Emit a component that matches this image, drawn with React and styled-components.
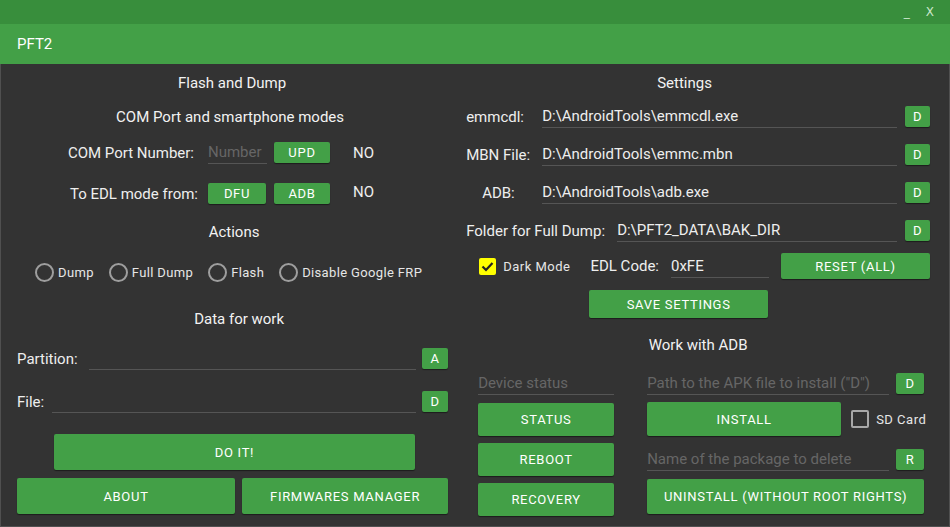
import React from "react";
import styled, { createGlobalStyle } from "styled-components";

const GlobalStyle = createGlobalStyle`
  body {
    margin: 0;
    background: #333333;
    font-family: Roboto, "Noto Sans", sans-serif;
    color: #eeeeee;
  }
`;

const Window = styled.div`
  width: 950px;
  height: 527px;
  display: flex;
  flex-direction: column;
  overflow: hidden;
`;

const TitleBar = styled.div`
  height: 24px;
  background: #388e3c;
  display: flex;
  justify-content: flex-end;
  align-items: center;
  padding-right: 16px;
  gap: 16px;
  color: #c8e6c9;
  font-size: 12px;
  font-family: "DejaVu Sans", sans-serif;
`;

const Header = styled.div`
  height: 40px;
  background: #43a047;
  display: flex;
  align-items: center;
  padding-left: 17px;
  font-size: 15px;
  color: #ffffff;
`;

const Body = styled.div`
  flex: 1;
  display: flex;
  background: #333333;
  border: 1px solid #505050;
  border-top: none;
`;

const LeftCol = styled.div`
  width: 459px;
  display: flex;
  flex-direction: column;
  padding-top: 9px;
`;

const RightCol = styled.div`
  flex: 1;
  display: flex;
  flex-direction: column;
  padding: 9px 19px 0 7px;
`;

const Title = styled.div`
  line-height: 20px;
  font-size: 15px;
  color: #f2f2f2;
  text-align: center;
  margin-top: ${(p) => p.$mt || 0}px;
  padding-left: ${(p) => p.$shift || 0}px;
  padding-right: ${(p) => p.$rshift || 0}px;
`;

const Button = styled.button`
  background: #43a047;
  border: none;
  border-radius: 2px;
  box-shadow: 0 1px 1px rgba(0, 0, 0, 0.45);
  color: #ffffff;
  font-family: Roboto, sans-serif;
  font-weight: 400;
  font-size: 13px;
  letter-spacing: 0.7px;
  text-transform: uppercase;
  padding: 0;
  width: ${(p) => (p.$w ? `${p.$w}px` : "auto")};
  height: ${(p) => p.$h || 21}px;
  flex: ${(p) => (p.$grow ? 1 : "none")};
  cursor: pointer;
`;

const Field = styled.div`
  height: 23px;
  box-sizing: border-box;
  border-bottom: 1px solid #555555;
  line-height: 22px;
  font-size: 15px;
  color: ${(p) => (p.$placeholder ? "#666666" : "#eeeeee")};
  width: ${(p) => (p.$w ? `${p.$w}px` : "auto")};
  flex: ${(p) => (p.$w ? "none" : 1)};
  margin-left: ${(p) => p.$ml || 0}px;
  white-space: nowrap;
  overflow: hidden;
`;

const Label = styled.span`
  font-size: 15px;
  line-height: 20px;
  color: #eeeeee;
  white-space: nowrap;
  width: ${(p) => (p.$w ? `${p.$w}px` : "auto")};
  padding-left: ${(p) => p.$pl || 0}px;
  margin-left: ${(p) => p.$ml || 0}px;
  box-sizing: border-box;
  flex: none;
`;

/* ---------- left column ---------- */

const ModeRow = styled.div`
  display: grid;
  grid-template-columns: 199px 58px 56px auto;
  column-gap: 8px;
  align-items: center;
  margin-top: ${(p) => p.$mt}px;
  height: 22px;
`;

const ModeLabel = styled.span`
  justify-self: end;
  font-size: 15px;
  padding-right: ${(p) => p.$pr}px;
  margin-top: ${(p) => p.$mt || 0}px;
  white-space: nowrap;
`;

const NoText = styled.span`
  font-size: 15px;
  margin-left: 15px;
  margin-top: ${(p) => p.$mt || 0}px;
`;

const RadioRow = styled.div`
  display: flex;
  align-items: center;
  padding-left: 34px;
  gap: 15px;
  margin-top: 20px;
  height: 20px;
`;

const RadioItem = styled.label`
  display: flex;
  align-items: center;
  gap: 4px;
  font-size: 13px;
  color: #e6e6e6;
  letter-spacing: 0.35px;
`;

const RadioCircle = styled.span`
  width: 15px;
  height: 15px;
  border: 2px solid #9e9e9e;
  border-radius: 50%;
`;

const DataRow = styled.div`
  display: flex;
  align-items: center;
  padding: 0 11px 0 16px;
  gap: 6px;
  margin-top: ${(p) => p.$mt}px;
`;

const DoItRow = styled.div`
  display: flex;
  padding-left: 53px;
  margin-top: 21px;
`;

const BottomRow = styled.div`
  display: flex;
  gap: 7px;
  padding: 0 11px 0 16px;
  margin-top: 8px;
`;

/* ---------- right column ---------- */

const SettingRow = styled.div`
  display: flex;
  align-items: center;
  gap: 8px;
  margin-top: ${(p) => p.$mt}px;
`;

const DarkRow = styled.div`
  display: flex;
  align-items: center;
  margin-top: 11px;
  padding-left: 13px;
`;

const CheckBox = styled.span`
  width: ${(p) => (p.$checked ? 17 : 14)}px;
  height: ${(p) => (p.$checked ? 17 : 14)}px;
  border-radius: 2px;
  background: ${(p) => (p.$checked ? "#ffff00" : "transparent")};
  border: ${(p) => (p.$checked ? "none" : "2px solid #a8a8a8")};
  display: flex;
  align-items: center;
  justify-content: center;
  flex: none;
  margin-left: ${(p) => p.$ml || 0}px;
`;

const CheckText = styled.span`
  font-size: 13px;
  letter-spacing: 0.5px;
  color: #e6e6e6;
  margin-left: 7px;
  white-space: nowrap;
`;

const SaveRow = styled.div`
  display: flex;
  padding-left: 123px;
  margin-top: 11px;
`;

const AdbGrid = styled.div`
  display: flex;
  gap: 33px;
  padding-left: 12px;
  margin-top: 17px;
`;

const AdbLeft = styled.div`
  width: 136px;
  display: flex;
  flex-direction: column;
  gap: 7px;
`;

const AdbRight = styled.div`
  width: 277px;
  display: flex;
  flex-direction: column;
`;

const AdbRow = styled.div`
  display: flex;
  align-items: center;
  gap: ${(p) => p.$gap ?? 7}px;
  margin-top: ${(p) => p.$mt || 0}px;
`;

const Check = () => (
  <svg width="13" height="11" viewBox="0 0 13 11">
    <path d="M1.5 5.5 L5 9 L11.5 2" fill="none" stroke="#222" strokeWidth="2.2" />
  </svg>
);

export default function App() {
  return (
    <>
      <GlobalStyle />
      <Window>
        <TitleBar>
          <span>_</span>
          <span>X</span>
        </TitleBar>
        <Header>PFT2</Header>
        <Body>
          <LeftCol>
            <Title $shift={4}>Flash and Dump</Title>
            <Title $mt={14}>COM Port and smartphone modes</Title>
            <ModeRow $mt={14}>
              <ModeLabel $pr={6}>COM Port Number:</ModeLabel>
              <Field $placeholder $w={59}>Number</Field>
              <Button $w={56}>UPD</Button>
              <NoText>NO</NoText>
            </ModeRow>
            <ModeRow $mt={19}>
              <ModeLabel $pr={2} $mt={2}>To EDL mode from:</ModeLabel>
              <Button $w={58}>DFU</Button>
              <Button $w={56}>ADB</Button>
              <NoText $mt={-3}>NO</NoText>
            </ModeRow>
            <Title $mt={18} $shift={8}>Actions</Title>
            <RadioRow>
              <RadioItem><RadioCircle />Dump</RadioItem>
              <RadioItem><RadioCircle />Full Dump</RadioItem>
              <RadioItem><RadioCircle />Flash</RadioItem>
              <RadioItem><RadioCircle />Disable Google FRP</RadioItem>
            </RadioRow>
            <Title $mt={27} $shift={18}>Data for work</Title>
            <DataRow $mt={18}>
              <Label>Partition:</Label>
              <Field $ml={5}></Field>
              <Button $w={26}>A</Button>
            </DataRow>
            <DataRow $mt={20}>
              <Label>File:</Label>
              <Field $ml={2}></Field>
              <Button $w={26}>D</Button>
            </DataRow>
            <DoItRow>
              <Button $w={361} $h={36}>DO IT!</Button>
            </DoItRow>
            <BottomRow>
              <Button $w={218} $h={36}>About</Button>
              <Button $grow $h={36}>Firmwares Manager</Button>
            </BottomRow>
          </LeftCol>

          <RightCol>
            <Title $rshift={27}>Settings</Title>
            <SettingRow $mt={12}>
              <Label $w={68}>emmcdl:</Label>
              <Field>D:\AndroidTools\emmcdl.exe</Field>
              <Button $w={25}>D</Button>
            </SettingRow>
            <SettingRow $mt={15}>
              <Label $w={68}>MBN File:</Label>
              <Field>D:\AndroidTools\emmc.mbn</Field>
              <Button $w={25}>D</Button>
            </SettingRow>
            <SettingRow $mt={15}>
              <Label $w={68} $pl={16}>ADB:</Label>
              <Field>D:\AndroidTools\adb.exe</Field>
              <Button $w={25}>D</Button>
            </SettingRow>
            <SettingRow $mt={15}>
              <Label $w={143}>Folder for Full Dump:</Label>
              <Field>D:\PFT2_DATA\BAK_DIR</Field>
              <Button $w={25}>D</Button>
            </SettingRow>
            <DarkRow>
              <CheckBox $checked><Check /></CheckBox>
              <CheckText>Dark Mode</CheckText>
              <Label $ml={20}>EDL Code:</Label>
              <Field $w={98} $ml={12}>0xFE</Field>
              <Button $w={149} $h={26} style={{ marginLeft: 12 }}>Reset (All)</Button>
            </DarkRow>
            <SaveRow>
              <Button $w={179} $h={28}>Save Settings</Button>
            </SaveRow>
            <Title $mt={17}>Work with ADB</Title>
            <AdbGrid>
              <AdbLeft>
                <Field $placeholder>Device status</Field>
                <Button $h={33} style={{ marginTop: 1 }}>Status</Button>
                <Button $h={33}>Reboot</Button>
                <Button $h={33}>Recovery</Button>
              </AdbLeft>
              <AdbRight>
                <AdbRow>
                  <Field $placeholder>Path to the APK file to install ("D")</Field>
                  <Button $w={28}>D</Button>
                </AdbRow>
                <AdbRow $mt={7} $gap={0}>
                  <Button $w={194} $h={34}>Install</Button>
                  <CheckBox $ml={10} />
                  <CheckText>SD Card</CheckText>
                </AdbRow>
                <AdbRow $mt={12}>
                  <Field $placeholder>Name of the package to delete</Field>
                  <Button $w={28}>R</Button>
                </AdbRow>
                <Button $h={35} style={{ marginTop: 8 }}>Uninstall (without root rights)</Button>
              </AdbRight>
            </AdbGrid>
          </RightCol>
        </Body>
      </Window>
    </>
  );
}
